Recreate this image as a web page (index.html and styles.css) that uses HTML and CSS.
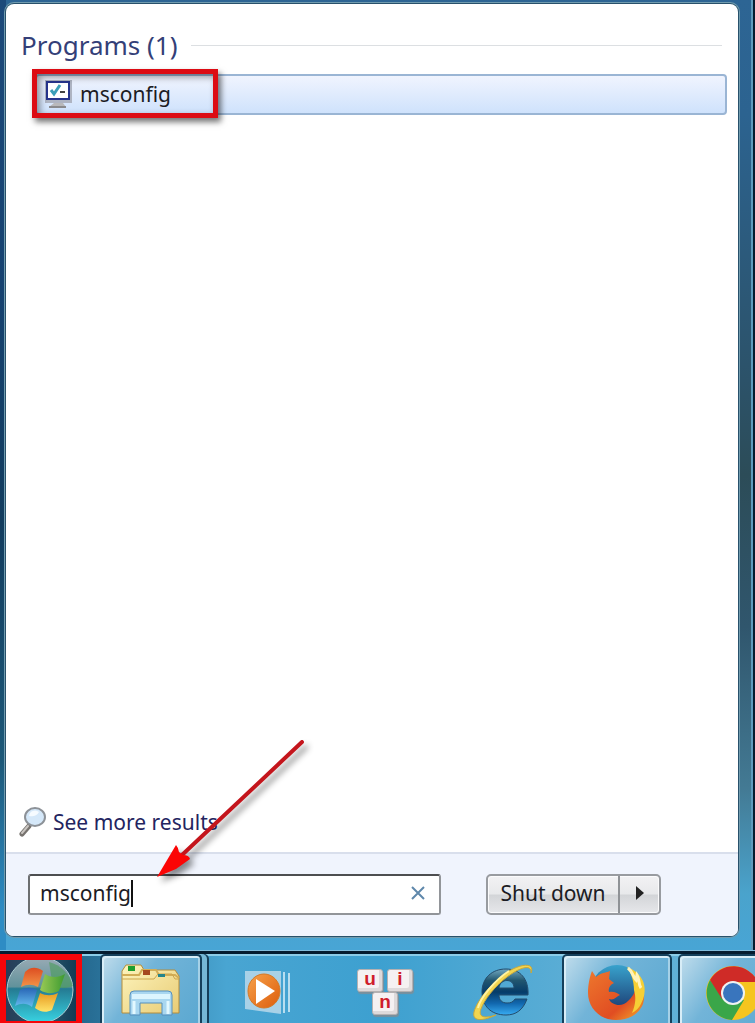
FILE: index.html
```html
<!DOCTYPE html>
<html lang="en">
<head>
    <meta charset="UTF-8">
    <title>Start menu</title>
    <link rel="stylesheet" href="styles.css">
</head>
<body>
    <div class="frame">
        <div class="menu">
            <div class="results">
                <h2 class="group">Programs (1)</h2>
                <a class="result" href="#">
                    <svg class="result-icon" width="30" height="30" viewBox="0 0 30 30">
                        <rect x="1" y="1" width="27" height="23" fill="#aeb4c2"/>
                        <rect x="3" y="3" width="22" height="17" fill="#fff" stroke="#26348c" stroke-width="2"/>
                        <path d="M7 11l3 4 6-9" fill="none" stroke="#3b9fb8" stroke-width="3"/>
                        <path d="M16 13h5" stroke="#444" stroke-width="2"/>
                        <path d="M10 24h9l3 4H5z" fill="#b9b9bb"/>
                        <path d="M5 28h17" stroke="#8a8a8c" stroke-width="2"/>
                    </svg>
                    <span>msconfig</span>
                    <span class="mark"></span>
                </a>
                <a class="more" href="#">
                    <svg width="28" height="32" viewBox="0 0 28 32">
                        <path d="M10 20L3 28" stroke="#77736f" stroke-width="5" stroke-linecap="round"/>
                        <path d="M9 20L3 27" stroke="#c9c5c1" stroke-width="2" stroke-linecap="round"/>
                        <ellipse cx="16" cy="11" rx="10" ry="9" fill="#d5e8f9" stroke="#8d9298" stroke-width="2"/>
                        <path d="M10 10a6 6 0 0 1 10-4c-2 4-6 5-10 4z" fill="#f6fbff"/>
                    </svg>
                    <span>See more results</span>
                </a>
            </div>
            <div class="bottom">
                <div class="search">
                    <input id="query" type="text" value="msconfig" aria-label="Search programs and files">
                    <span class="caret"></span>
                    <button class="clear" type="button" aria-label="Clear">
                        <svg width="14" height="14" viewBox="0 0 14 14">
                            <path d="M1 1l12 12M13 1L1 13" stroke="#5f88ab" stroke-width="2"/>
                        </svg>
                    </button>
                </div>
                <div class="power">
                    <button class="shutdown" type="button">Shut down</button>
                    <button class="options" type="button" aria-label="More options">
                        <svg width="8" height="14" viewBox="0 0 8 14"><path d="M0 0l8 7-8 7z" fill="#222"/></svg>
                    </button>
                </div>
                <svg class="arrow" width="170" height="150" viewBox="0 0 170 150">
                    <path d="M150 5L30 118" stroke="#c4151c" stroke-width="4" stroke-linecap="round"/>
                    <path d="M5 140L24 108q2 2 3 7l4 3q6 0 7 4L24 132z" fill="#fb0505"/>
                </svg>
            </div>
        </div>
    </div>
    <div class="taskbar">
        <button class="start" type="button" aria-label="Start">
            <svg width="70" height="61" viewBox="0 0 70 61">
                <defs>
                    <linearGradient id="bg" x2="1" y2="0"><stop offset="0" stop-color="#273d58"/><stop offset=".6" stop-color="#28566c"/><stop offset="1" stop-color="#123b55"/></linearGradient>
                    <linearGradient id="orb" x2="0" y2="1"><stop offset="0" stop-color="#9aabb5"/><stop offset=".45" stop-color="#61929b"/><stop offset=".48" stop-color="#247a92"/><stop offset="1" stop-color="#38d4e3"/></linearGradient>
                    <linearGradient id="red" x2="0" y2="1"><stop offset="0" stop-color="#dd4d21"/><stop offset="1" stop-color="#f39447"/></linearGradient>
                    <linearGradient id="green" x2="1" y2="0"><stop offset="0" stop-color="#9ac954"/><stop offset="1" stop-color="#3d9b31"/></linearGradient>
                    <linearGradient id="blue" x2="0" y2="1"><stop offset="0" stop-color="#2865b5"/><stop offset="1" stop-color="#65bdf0"/></linearGradient>
                    <linearGradient id="yellow" x2="0" y2="1"><stop offset="0" stop-color="#e79a20"/><stop offset="1" stop-color="#ffe36a"/></linearGradient>
                </defs>
                <rect width="70" height="61" fill="url(#bg)"/>
                <circle cx="34" cy="30" r="33" fill="url(#orb)" stroke="#a9cbd1"/>
                <path d="M43 2c12 3 21 12 24 24-7 3-14 2-20 1z" fill="#4a9c59" opacity=".6"/>
                <path d="M19 12c5-5 11-6 18-1l-5 16c-6-3-11-3-17 0z" fill="url(#red)"/>
                <path d="M39 14c6 4 13 4 20 0l-6 17c-6 3-13 3-19-1z" fill="url(#green)"/>
                <path d="M14 30c6-3 12-3 17 0l-5 17c-5-4-11-4-17-1z" fill="url(#blue)"/>
                <path d="M34 33c6 3 12 3 18 0l-6 17c-6 3-12 2-17-2z" fill="url(#yellow)"/>
            </svg>
        </button>
        <button class="task open double" type="button" aria-label="Windows Explorer">
            <svg width="62" height="58" viewBox="0 0 62 58">
                <defs><linearGradient id="folder" x2="1" y2="1"><stop offset="0" stop-color="#fdf4bd"/><stop offset="1" stop-color="#e8cc75"/></linearGradient></defs>
                <path d="M2 51V9l4-6h15l3 5h31l4 6v37z" fill="url(#folder)" stroke="#b48d3c"/>
                <rect x="8" y="4" width="7" height="5" fill="#1d9e2d"/>
                <path d="M2 13h17l3-5h14l3 5h16l4 3" fill="none" stroke="#d2ad57" stroke-width="2"/>
                <rect x="23" y="8" width="7" height="5" fill="#a5481f"/>
                <path d="M2 17h32l4-5h14l3 5h4" fill="none" stroke="#cda64c"/>
                <rect x="38" y="12" width="7" height="3" fill="#25848b"/>
                <path d="M10 33q0-4 4-4h34q4 0 4 4v20H42V41H20v12H10z" fill="#a9d7f0" stroke="#558fbd"/>
                <path d="M12 32h38v5H12z" fill="#dcf5fe"/>
                <path d="M14 39v13M48 39v13" stroke="#e2f8ff" stroke-width="3"/>
            </svg>
        </button>
        <button class="task" type="button" aria-label="Windows Media Player">
            <svg width="50" height="50" viewBox="0 0 50 50">
                <defs><linearGradient id="play" x2="1" y2="1"><stop offset="0" stop-color="#f6a14a"/><stop offset="1" stop-color="#dd5d0c"/></linearGradient></defs>
                <path d="M3 4h36v43L3 42z" fill="#a8d1e7"/>
                <path d="M42 5v41M47 6v39" stroke="#b8def0" stroke-width="2"/>
                <ellipse cx="22" cy="24" rx="16" ry="17" fill="url(#play)" stroke="#d37927"/>
                <path d="M14 12l19 12-19 13z" fill="#fff"/>
            </svg>
        </button>
        <button class="task" type="button" aria-label="Uin">
            <span class="keys">
                <span class="key">u</span>
                <span class="key">i</span>
                <span class="key">n</span>
            </span>
        </button>
        <button class="task" type="button" aria-label="Internet Explorer">
            <svg width="62" height="60" viewBox="0 0 62 60">
                <defs><linearGradient id="ie" x2="0" y2="1"><stop offset="0" stop-color="#71a9c1"/><stop offset=".25" stop-color="#21566f"/><stop offset=".5" stop-color="#063c68"/><stop offset=".75" stop-color="#1268af"/><stop offset="1" stop-color="#38adf3"/></linearGradient></defs>
                <path d="M56 33H27c0 5 3 8 8 8 4 0 6-1 8-4h12c-4 11-11 16-21 16C19 53 10 44 10 30 10 16 20 7 34 7c14 0 23 10 22 26zM27 26h15c0-10-14-10-15 0z" fill="url(#ie)" stroke="#234c6c" fill-rule="evenodd"/>
                <path d="M59 11C63 1 51 1 37 9 21 19 5 38 2 50c-2 9 7 10 22 3-12 4-18 2-15-6 3-9 14-23 26-32C47 6 60 1 59 11z" fill="#f2d550" stroke="#c9a83b"/>
                <path d="M37 9C23 18 8 36 6 46" fill="none" stroke="#fff3a2" stroke-width="2"/>
            </svg>
        </button>
        <button class="task open" type="button" aria-label="Firefox">
            <svg width="60" height="58" viewBox="0 0 60 58">
                <defs>
                    <linearGradient id="fox" x2="1" y2="1"><stop offset="0" stop-color="#ed772d"/><stop offset=".65" stop-color="#e14d22"/><stop offset="1" stop-color="#f4ae2b"/></linearGradient>
                    <linearGradient id="globe" x2="0" y2="1"><stop offset="0" stop-color="#38a2cc"/><stop offset="1" stop-color="#182d65"/></linearGradient>
                </defs>
                <circle cx="30" cy="27" r="26" fill="url(#globe)"/>
                <path d="M48 10c8 8 11 20 8 30-4 10-14 16-27 16C12 56 1 43 1 29 1 20 3 12 5 7l4 6c4-4 9-4 14-6l-1 8 5 4c-4 2-6 5-5 9 5-1 8 1 11 3-3 1-6 6-11 4 2 6 13 9 19 2 9-8 9-17 7-27z" fill="url(#fox)"/>
                <path d="M40 3c14 5 20 17 17 29-2 8-6 14-12 17 4-9 4-16 2-23 0-9-3-17-7-23z" fill="#f6cf35"/>
                <path d="M41 4c5 4 5 9 8 12l1-5c3 5 1 9 4 13" fill="none" stroke="#fff3ba" stroke-width="3"/>
            </svg>
        </button>
        <button class="task open" type="button" aria-label="Chrome">
            <svg width="56" height="56" viewBox="0 0 56 56">
                <circle cx="28" cy="28" r="27" fill="#f5c51f"/>
                <path d="M5 15A27 27 0 0 0 27 55l12-20-20-2z" fill="#3aa649"/>
                <path d="M5 15L17 34l11-17h25A27 27 0 0 0 5 15z" fill="#cf2b27"/>
                <circle cx="28" cy="28" r="12" fill="#f1f3f2"/>
                <circle cx="28" cy="28" r="10" fill="#3975bd"/>
            </svg>
        </button>
    </div>
</body>
</html>
```
FILE: styles.css
```css
*{
    box-sizing: border-box;
    margin: 0;
    padding: 0;
}
html,body{
    height: 100%;
}
body{
    display: flex;
    flex-direction: column;
    overflow: hidden;
    font: 21px "Noto Sans","Open Sans",sans-serif;
    color: #1c1c24;
    background: #041c30;
}
button,input{
    font: inherit;
    color: inherit;
    border: 0;
    background: none;
}
svg{
    display: block;
    flex: none;
}
/* glass frame round the start menu */
.frame{
    flex: 1;
    display: flex;
    margin-right: 2px;
    padding: 4px 13px 14px 6px;
    border-right: 2px solid #5f9bbd;
    background: linear-gradient(#1d4a7a,#164270 30%,#123c5e 55%,#1d5878 80%,#2e8cc4 96%) 0 0/6px 100% no-repeat,linear-gradient(#2d6594,#2c6390 12%,#2c5269 40%,#2c4c58 50%,#30566d 66%,#437a94 83%,#4aa3cc 94%,#48a5d5);
}
.menu{
    flex: 1;
    display: flex;
    flex-direction: column;
    border-radius: 8px;
    background: #fff;
    box-shadow: 0 0 0 1px #28516b,0 0 0 2px #719caf;
}
.results{
    flex: 1;
    display: flex;
    flex-direction: column;
    padding: 21px 11px 12px 13px;
}
.group{
    display: flex;
    align-items: center;
    gap: 14px;
    padding: 0 5px 0 2px;
    font-size: 26px;
    font-weight: 400;
    line-height: 40px;
    color: #343f78;
}
.group::after{
    content: "";
    flex: 1;
    height: 1px;
    background: #dcdfe2;
}
.result{
    position: relative;
    display: flex;
    align-items: center;
    gap: 6px;
    height: 41px;
    margin: 9px 0 0 16px;
    padding: 0 0 2px 7px;
    border: 2px solid #9ab5d4;
    border-radius: 4px;
    background: linear-gradient(#f0f4fe,#cfe2fc);
    color: #1c1c24;
    text-decoration: none;
}
/* red frame lies over the row */
.mark{
    position: absolute;
    left: -5px;
    top: -7px;
    width: 186px;
    height: 49px;
    border: 5px solid #dc0b13;
    box-shadow: 3px 4px 6px rgba(0,0,0,.55),inset 3px 3px 7px rgba(0,0,0,.4);
}
.more{
    display: flex;
    align-items: center;
    gap: 6px;
    margin-top: auto;
    line-height: 36px;
    color: #23245f;
    text-decoration: none;
}
.bottom{
    position: relative;
    display: flex;
    align-items: center;
    gap: 45px;
    height: 84px;
    padding: 0 77px 2px 22px;
    border-top: 2px solid #d9dfec;
    border-radius: 0 0 7px 7px;
    background: #f0f4fd;
}
.search{
    flex: 1;
    display: flex;
    align-items: center;
    height: 41px;
    padding: 0 14px 2px 10px;
    border: 2px solid #929599;
    border-top-color: #4d4e50;
    border-left-color: #6c6e70;
    border-radius: 3px;
    background: #fff;
}
.search input{
    field-sizing: content;
    outline: 0;
}
.caret{
    width: 2px;
    height: 27px;
    background: #111;
}
.clear{
    margin-left: auto;
}
.power{
    display: flex;
    height: 41px;
    border: 2px solid #989ba0;
    border-radius: 5px;
    background: linear-gradient(#f2f2f4,#e8e9eb 48%,#d3d5d8 52%,#e6e7ea);
    box-shadow: inset 0 0 0 1px #fbfbfc;
}
.power button{
    padding-bottom: 2px;
}
.shutdown{
    width: 132px;
    border-right: 2px solid #8f9296;
}
.options{
    display: flex;
    align-items: center;
    justify-content: center;
    width: 39px;
}
.arrow{
    position: absolute;
    left: 146px;
    top: -117px;
    filter: drop-shadow(4px 5px 3px rgba(0,0,0,.45));
}
.taskbar{
    display: flex;
    height: 73px;
    padding-top: 3px;
    border-top: 1px solid #7fbcdc;
    background: linear-gradient(#041c30 3px,#8bcce8 3px,#8bcce8 5px,transparent 5px),linear-gradient(90deg,#10405f,#276d94 12%,#49a5d2 30%,#3da0d0 50%,#5aadd5 75%,#65b2d8);
}
.start{
    flex: none;
    width: 82px;
    border: 6px solid #f60509;
    margin-right: 18px;
}
.task{
    flex: none;
    display: flex;
    align-items: center;
    justify-content: center;
    width: 118px;
    padding-top: 6px;
}
.open{
    width: 110px;
    margin-right: 6px;
    border: 2px solid #143f5b;
    border-bottom: 0;
    border-radius: 5px 5px 0 0;
    background: linear-gradient(125deg,#c1ddec,#72b4d8 40%,#5ba8d1);
    box-shadow: inset 2px 2px #d8edf7,inset -2px 0 #a5d1e7;
}
.double{
    width: 102px;
    margin-right: 6px;
    padding-top: 2px;
    box-shadow: inset 2px 2px #d8edf7,inset -2px 0 #a5d1e7,5px 0 #75b7d6,7px 0 #143f5b;
}
.keys{
    display: flex;
    flex-wrap: wrap;
    justify-content: center;
    gap: 0 4px;
    width: 60px;
}
.key{
    width: 26px;
    height: 23px;
    border: 1px solid #b5b1b2;
    border-radius: 3px;
    background: #f5f1f2;
    box-shadow: 1px 2px 1px #79909d,inset -3px -3px #dedadb;
    font: 700 19px/18px "Liberation Sans",sans-serif;
    color: #cf1d2b;
    text-align: center;
}
```
